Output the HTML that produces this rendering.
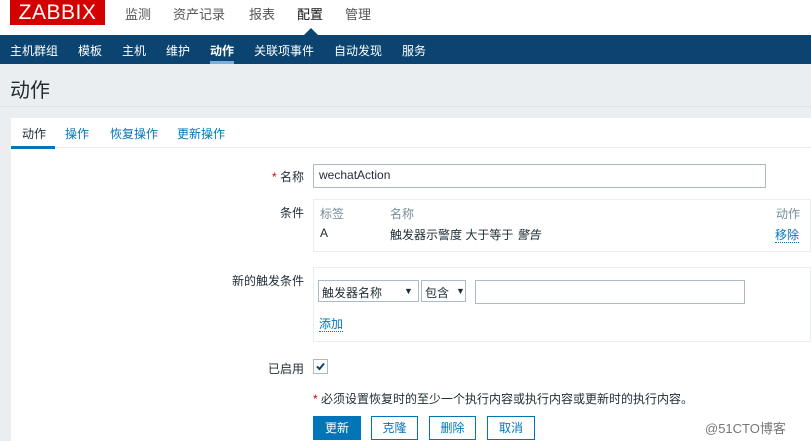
<!DOCTYPE html>
<html><head><meta charset="utf-8"><style>
*{margin:0;padding:0;box-sizing:border-box}
body{width:811px;height:441px;overflow:hidden;background:#ebeef0;font-family:"Liberation Sans","Noto Sans CJK SC",sans-serif;font-size:12px;color:#1f2c33;position:relative}
.a{position:absolute;white-space:nowrap}
.hdr{position:absolute;left:0;top:0;width:811px;height:35px;background:#fff}
.nav{position:absolute;left:0;top:35px;width:811px;height:29px;background:#0b4470}
.nav span{position:absolute;top:7px;color:#fff;font-size:12px}
.panel{position:absolute;left:11px;top:118px;width:800px;height:323px;background:#fff}
.lbl{position:absolute;text-align:right;width:80px;color:#1f2c33}
.inp{position:absolute;border:1px solid #acbbc2;background:#fff}
.btn{position:absolute;top:416px;height:24px;border:1px solid #0275b8;color:#0275b8;background:#fff;font-size:12px;text-align:center;line-height:22px}
.link{color:#0275b8;border-bottom:1px dotted #0275b8}
</style></head><body>
<div class="hdr"></div>
<div class="a" style="left:10px;top:0;width:95px;height:25px;background:#d40000;color:#fff;font-size:21px;line-height:25px;text-align:center;letter-spacing:0.5px">ZABBIX</div>
<div class="a" style="left:125px;top:4px;font-size:13px;color:#555">监测</div>
<div class="a" style="left:173px;top:4px;font-size:13px;color:#555">资产记录</div>
<div class="a" style="left:249px;top:4px;font-size:13px;color:#555">报表</div>
<div class="a" style="left:297px;top:4px;font-size:13px;color:#111">配置</div>
<div class="a" style="left:345px;top:4px;font-size:13px;color:#555">管理</div>
<div class="a" style="left:304px;top:28px;width:0;height:0;border-left:7px solid transparent;border-right:7px solid transparent;border-bottom:7px solid #0b4470"></div>
<div class="nav">
<span style="left:10px">主机群组</span><span style="left:78px">模板</span><span style="left:122px">主机</span><span style="left:166px">维护</span><span style="left:210px;font-weight:bold">动作</span><span style="left:254px">关联项事件</span><span style="left:334px">自动发现</span><span style="left:402px">服务</span>
<div class="a" style="left:210px;top:26px;width:24px;height:3px;background:#7bb0dd"></div>
</div>
<div class="a" style="left:10px;top:74px;font-size:20px;color:#1f2c33">动作</div>
<div class="a" style="left:0;top:106px;width:811px;height:1px;background:#dde2e5"></div>
<div class="panel"></div>
<div class="a" style="left:22px;top:125px;color:#1f2c33">动作</div>
<div class="a" style="left:65px;top:125px;color:#0275b8">操作</div>
<div class="a" style="left:110px;top:125px;color:#0275b8">恢复操作</div>
<div class="a" style="left:177px;top:125px;color:#0275b8">更新操作</div>
<div class="a" style="left:11px;top:147px;width:800px;height:1px;background:#ebeef0"></div>
<div class="a" style="left:11px;top:146px;width:44px;height:3px;background:#0275b8"></div>

<div class="lbl" style="left:224px;top:168px"><span style="color:#d40000">* </span>名称</div>
<div class="inp" style="left:313px;top:164px;width:453px;height:24px"></div>
<div class="a" style="left:319px;top:168px">wechatAction</div>

<div class="a" style="left:313px;top:199px;width:498px;height:53px;border:1px solid #ebeef0;background:#fff"></div>
<div class="lbl" style="left:224px;top:204px">条件</div>
<div class="a" style="left:320px;top:205px;color:#768d99">标签</div>
<div class="a" style="left:390px;top:205px;color:#768d99">名称</div>
<div class="a" style="left:776px;top:205px;color:#768d99">动作</div>
<div class="a" style="left:320px;top:226px">A</div>
<div class="a" style="left:390px;top:226px">触发器示警度 大于等于 <i>警告</i></div>
<div class="a" style="left:775px;top:226px"><span class="link">移除</span></div>

<div class="a" style="left:313px;top:267px;width:498px;height:75px;border:1px solid #ebeef0;background:#fff"></div>
<div class="lbl" style="left:224px;top:272px;width:80px">新的触发条件</div>
<div class="inp" style="left:318px;top:280px;width:101px;height:22px"></div>
<div class="a" style="left:322px;top:284px">触发器名称</div>
<div class="a" style="left:404px;top:286px;font-size:9px">▼</div>
<div class="inp" style="left:421px;top:280px;width:45px;height:22px"></div>
<div class="a" style="left:425px;top:284px">包含</div>
<div class="a" style="left:456px;top:286px;font-size:9px">▼</div>
<div class="inp" style="left:475px;top:280px;width:270px;height:24px"></div>
<div class="a" style="left:319px;top:315px"><span class="link">添加</span></div>

<div class="lbl" style="left:224px;top:360px">已启用</div>
<div class="inp" style="left:313px;top:359px;width:15px;height:15px"></div>
<svg class="a" style="left:315px;top:361px" width="11" height="11"><path d="M2 5.5 L4.5 8 L9 2.5" stroke="#0b4470" stroke-width="2" fill="none"/></svg>
<div class="a" style="left:313px;top:390px"><span style="color:#d40000">* </span>必须设置恢复时的至少一个执行内容或执行内容或更新时的执行内容。</div>
<div class="btn" style="left:313px;width:48px;background:#0275b8;color:#fff">更新</div>
<div class="btn" style="left:371px;width:47px">克隆</div>
<div class="btn" style="left:429px;width:47px">删除</div>
<div class="btn" style="left:487px;width:48px">取消</div>
<div class="a" style="left:705px;top:418px;font-size:13px;color:#777">@51CTO博客</div>
</body></html>
